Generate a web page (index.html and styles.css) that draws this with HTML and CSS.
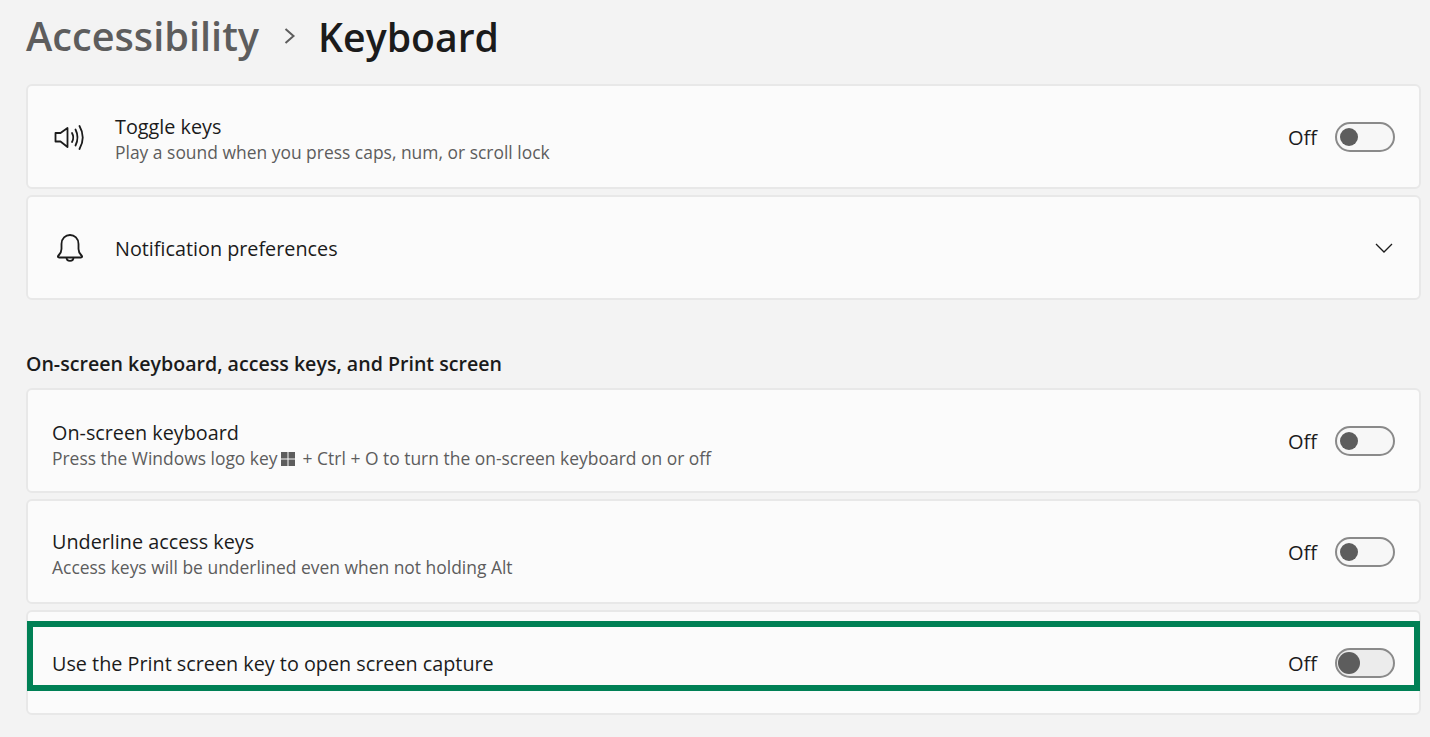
FILE: index.html
```html
<!DOCTYPE html>
<html lang="en">
<head>
    <meta charset="UTF-8">
    <meta name="viewport" content="width=device-width, initial-scale=1.0">
    <title>Keyboard</title>
    <link rel="stylesheet" href="styles.css">
</head>
<body>
    <header class="breadcrumb">
        <span class="crumb-parent">Accessibility</span>
        <svg class="crumb-sep" width="14" height="18" viewBox="0 0 14 18"><path d="M2.500 2 L10.500 9 L2.500 16" fill="none" stroke="#5d5d5d" stroke-width="2"/></svg>
        <span class="crumb-current">Keyboard</span>
    </header>

    <section class="group">
        <div class="card">
            <svg class="card-icon" width="32" height="28" viewBox="-1.500 0 32 28">
                <path d="M2 10 H7 L14 5 V24 L7 18.500 H2 Z" fill="none" stroke="#1b1b1b" stroke-width="1.8" stroke-linejoin="round"/>
                <path d="M18.500 10 Q21 14.500 18.500 19" fill="none" stroke="#1b1b1b" stroke-width="1.8" stroke-linecap="round"/>
                <path d="M22 6.500 Q26 14.500 22 22.500" fill="none" stroke="#1b1b1b" stroke-width="1.8" stroke-linecap="round"/>
                <path d="M26 3 Q32.500 14.500 26 26" fill="none" stroke="#1b1b1b" stroke-width="1.8" stroke-linecap="round"/>
            </svg>
            <div class="card-text">
                <div class="card-title">Toggle keys</div>
                <div class="card-desc">Play a sound when you press caps, num, or scroll lock</div>
            </div>
            <span class="state">Off</span>
            <span class="switch"><span class="knob"></span></span>
        </div>
        <div class="card">
            <svg class="card-icon" width="32" height="30" viewBox="-3 0 32 30">
                <path d="M3 23 Q6.500 20 6.500 16 V11 C6.500 5.500 10.500 2 15 2 C19.500 2 23.500 5.500 23.500 11 V16 Q23.500 20 27 23 Q27.500 24.500 26 24.500 H4 Q2.500 24.500 3 23 Z" fill="none" stroke="#1b1b1b" stroke-width="1.8" stroke-linejoin="round"/>
                <path d="M11.500 24.500 C11.500 29 18.500 29 18.500 24.500" fill="none" stroke="#1b1b1b" stroke-width="1.8"/>
            </svg>
            <div class="card-text">
                <div class="card-title">Notification preferences</div>
            </div>
            <svg class="chevron" width="18" height="10" viewBox="0 0 18 10"><path d="M1 1 L9 9 L17 1" fill="none" stroke="#1b1b1b" stroke-width="1.3"/></svg>
        </div>
    </section>

    <h2 class="group-title">On-screen keyboard, access keys, and Print screen</h2>

    <section class="group">
        <div class="card">
            <div class="card-text card-text-logo">
                <div class="card-title">On-screen keyboard</div>
                <div class="card-desc">Press the Windows logo key
                    <svg class="win-logo" width="14" height="14" viewBox="0 0 14 14"><path d="M0 0h6.500v6.500H0z M7.500 0H14v6.500H7.500z M0 7.500h6.500V14H0z M7.500 7.500H14V14H7.500z" fill="#5d5d5d"/></svg>
                    + Ctrl + O to turn the on-screen keyboard on or off</div>
            </div>
            <span class="state">Off</span>
            <span class="switch"><span class="knob"></span></span>
        </div>
        <div class="card">
            <div class="card-text">
                <div class="card-title">Underline access keys</div>
                <div class="card-desc">Access keys will be underlined even when not holding Alt</div>
            </div>
            <span class="state">Off</span>
            <span class="switch"><span class="knob"></span></span>
        </div>
        <div class="card">
            <div class="card-text">
                <div class="card-title">Use the Print screen key to open screen capture</div>
            </div>
            <span class="state">Off</span>
            <span class="switch switch-hover"><span class="knob"></span></span>
            <div class="highlight"></div>
        </div>
    </section>
</body>
</html>
```

FILE: styles.css
```css
body {
    font-family: "Open Sans", "Noto Sans", Arial, sans-serif;
    background: #f3f3f3;
    color: #1b1b1b;
    margin: 0;
    height: 737px;
    overflow: hidden;
    padding: 0 9px 0 26px;
}

.breadcrumb {
    display: flex;
    align-items: center;
    height: 84px;
    padding-bottom: 12px;
    box-sizing: border-box;
    font-weight: 600;
}

.crumb-parent {
    color: #5d5d5d;
    font-size: 39.7px;
}

.crumb-current {
    font-size: 39.2px;
}

.crumb-sep {
    margin: 0 21px 0 24px;
}

.group {
    display: flex;
    flex-direction: column;
    gap: 6px;
}

.group-title {
    font-size: 19.6px;
    font-weight: 600;
    line-height: 26px;
    margin: 51px 0 11px;
}

.card {
    position: relative;
    display: flex;
    align-items: center;
    height: 105px;
    box-sizing: border-box;
    padding: 0 24px;
    background: #fbfbfb;
    border: 2px solid #e8e8e8;
    border-radius: 6px;
}

.card-icon {
    flex: none;
    margin-right: 31px;
}

.card-text {
    flex: 1;
    padding-top: 2px;
}

.card-text-logo {
    padding-top: 7px;
}

.card-title {
    font-size: 19.8px;
    line-height: 26px;
}

.card-desc {
    font-size: 17.45px;
    line-height: 24px;
    margin-bottom: -2px;
    color: #5d5d5d;
}

.win-logo {
    vertical-align: -1px;
    margin: 0 3px 0 -1px;
}

.state {
    font-size: 20px;
    padding-top: 2px;
    margin-right: 18px;
}

.switch {
    display: flex;
    align-items: center;
    width: 60px;
    height: 30px;
    box-sizing: border-box;
    padding-left: 3px;
    background: #f7f7f7;
    border: 2px solid #8a8a8a;
    border-radius: 15px;
}

.knob {
    width: 18px;
    height: 18px;
    background: #5d5d5d;
    border-radius: 50%;
}

.chevron {
    margin-right: 2px;
}

.switch-hover {
    padding-left: 1px;
    background: #ececec;
}

.switch-hover .knob {
    width: 22px;
    height: 22px;
}

.highlight {
    position: absolute;
    left: -1px;
    right: -1px;
    top: 9px;
    height: 70px;
    box-sizing: border-box;
    border: 6px solid #008055;
}
```
